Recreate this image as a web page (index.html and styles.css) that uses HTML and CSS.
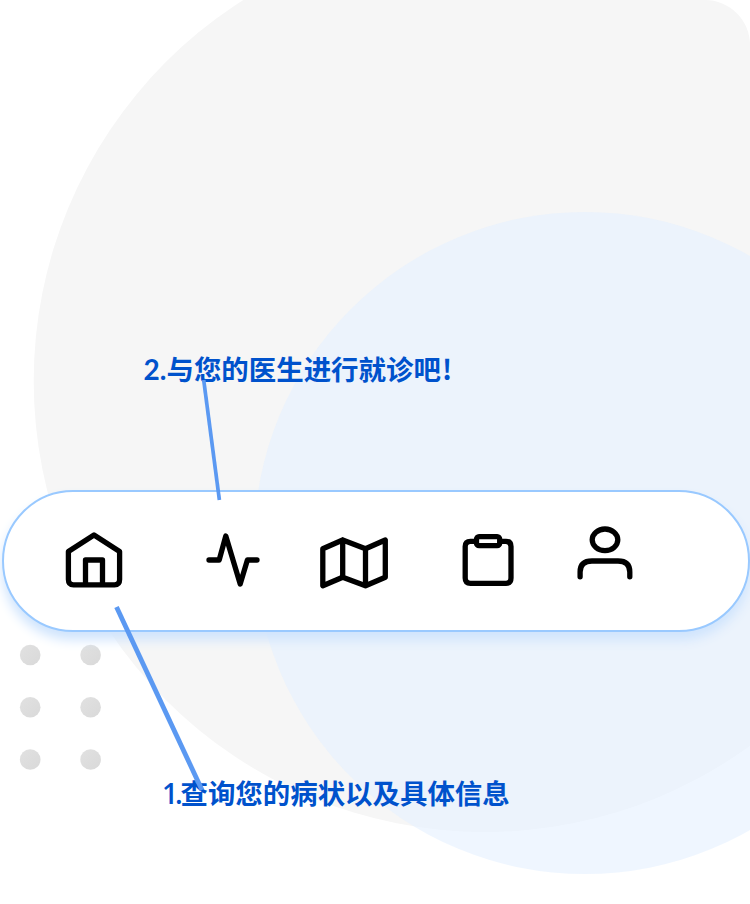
FILE: index.html
```html
<!DOCTYPE html>
<html lang="zh-CN">
<head>
<meta charset="utf-8">
<title>就诊引导</title>
<link rel="stylesheet" href="styles.css">
</head>
<body>
<main class="screen">
  <svg class="backdrop" viewBox="0 0 750 904" aria-hidden="true">
    <defs>
      <linearGradient id="dot" x1="0" y1="0" x2="1" y2="1"><stop offset="0" stop-color="#e1e1e1"/><stop offset="1" stop-color="#d9d9d9"/></linearGradient>
    </defs>
    <circle cx="484.7" cy="381" r="451" fill="#f6f6f6"/>
    <circle cx="585" cy="543" r="331" class="disc-blue"/>
    <g fill="url(#dot)">
      <circle cx="30.2" cy="655" r="10.3"/><circle cx="90.6" cy="655" r="10.3"/>
      <circle cx="30.2" cy="707.3" r="10.3"/><circle cx="90.6" cy="707.3" r="10.3"/>
      <circle cx="30.2" cy="759.5" r="10.3"/><circle cx="90.6" cy="759.5" r="10.3"/>
    </g>
  </svg>
  <p class="tip tip-doctor"><span class="num">2.</span>与您的医生进行就诊吧<span class="mark">!</span></p>
  <nav class="bar">
    <svg class="icon home" width="60" height="58" viewBox="64 531 60 58"><path d="M94 535 L119.6 551.5 V579.5 Q119.6 584.8 114.5 584.8 H73.5 Q68.4 584.8 68.4 579.5 V551.5Z M85.5 584.5 V560 H102.5 V584.5"/></svg>
    <svg class="icon pulse" width="56" height="56" viewBox="205 532 56 56"><path d="M209 560 H219.2 L225.8 536 L240.2 584 L247.4 560 H257"/></svg>
    <svg class="icon map" width="70" height="54" viewBox="319 537 70 54"><path d="M322.8 549.7 L342.7 541 L365.5 549.7 L385.3 541 V578.2 L365.5 586.8 L342.7 578.2 L322.8 586.8Z M342.7 541 V578.2 M365.5 549.7 V586.8"/></svg>
    <svg class="icon clip" width="54" height="54" viewBox="461 533 54 54"><path d="M476 541.3 H470.5 Q465.2 541.3 465.2 546.5 V578 Q465.2 583.3 470.5 583.3 H506 Q511 583.3 511 578 V546.5 Q511 541.3 506 541.3 H500.5"/><rect x="476.5" y="536.7" width="23.2" height="9" rx="2.5"/></svg>
    <svg class="icon user" width="60" height="56" viewBox="575 526 60 56"><ellipse cx="605" cy="540.8" rx="12.8" ry="10.8"/><path d="M580.1 577.8 V573 Q580.1 562 592 562 H618 Q629.8 562 629.8 573 V577.8"/></svg>
  </nav>
  <p class="tip tip-symptom"><span class="num one">1.</span>查询您的病状以及具体信息</p>
  <svg class="leaders" viewBox="0 0 750 904" aria-hidden="true">
    <path d="M203.7 380 L219.4 500" stroke-width="3.7"/>
    <path d="M116.5 607 L202 790" stroke-width="4.8"/>
  </svg>
</main>
</body>
</html>
```
FILE: styles.css
```css
* { box-sizing: border-box; }
body { margin: 0; background: #fff; }
.screen {
  position: relative;
  width: 750px;
  height: 904px;
  overflow: hidden;
  border-top-right-radius: 45px;
  display: flex;
  flex-direction: column;
  padding-top: 348px;
}
.backdrop, .leaders { position: absolute; top: 0; left: 0; width: 750px; height: 904px; }
.disc-blue { fill: rgba(229, 240, 255, 0.62); }
.leaders { fill: none; stroke: #5b99f2; pointer-events: none; }
.tip {
  position: relative;
  display: flex;
  margin: 0;
  height: 40px;
  line-height: 40px;
  font-family: "Noto Sans CJK SC", sans-serif;
  font-size: 27.45px;
  font-weight: 700;
  color: #0052cc;
  white-space: nowrap;
}
.tip-doctor { margin-left: 143.5px; }
.tip-symptom { margin: 140px 0 0 163px; }
.num { width: 23px; padding-top: 1px; font-family: Lato, sans-serif; font-size: 28px; }
.one { width: 17.5px; font-family: "Open Sans", sans-serif; font-weight: 600; letter-spacing: -3px; margin-left: -1px; margin-right: 1px; }
.mark { margin-left: 1px; }
.bar {
  position: relative;
  display: flex;
  flex: none;
  width: 748px;
  height: 142px;
  margin: 102px 0 0 2px;
  padding: 0 0 2px 60px;
  align-items: center;
  background: #fff;
  border: 2px solid #99c9ff;
  border-radius: 71px;
  box-shadow: 0 8px 12px #cfe4fd;
}
.icon { flex: none; fill: none; stroke: #000; stroke-width: 5.3; stroke-linecap: round; stroke-linejoin: round; }
.home { margin-right: 81px; }
.pulse { margin-right: 58px; }
.map { margin: 6px 72px 0 0; }
.clip { margin-right: 60px; }
.user { margin-bottom: 14px; }
```
